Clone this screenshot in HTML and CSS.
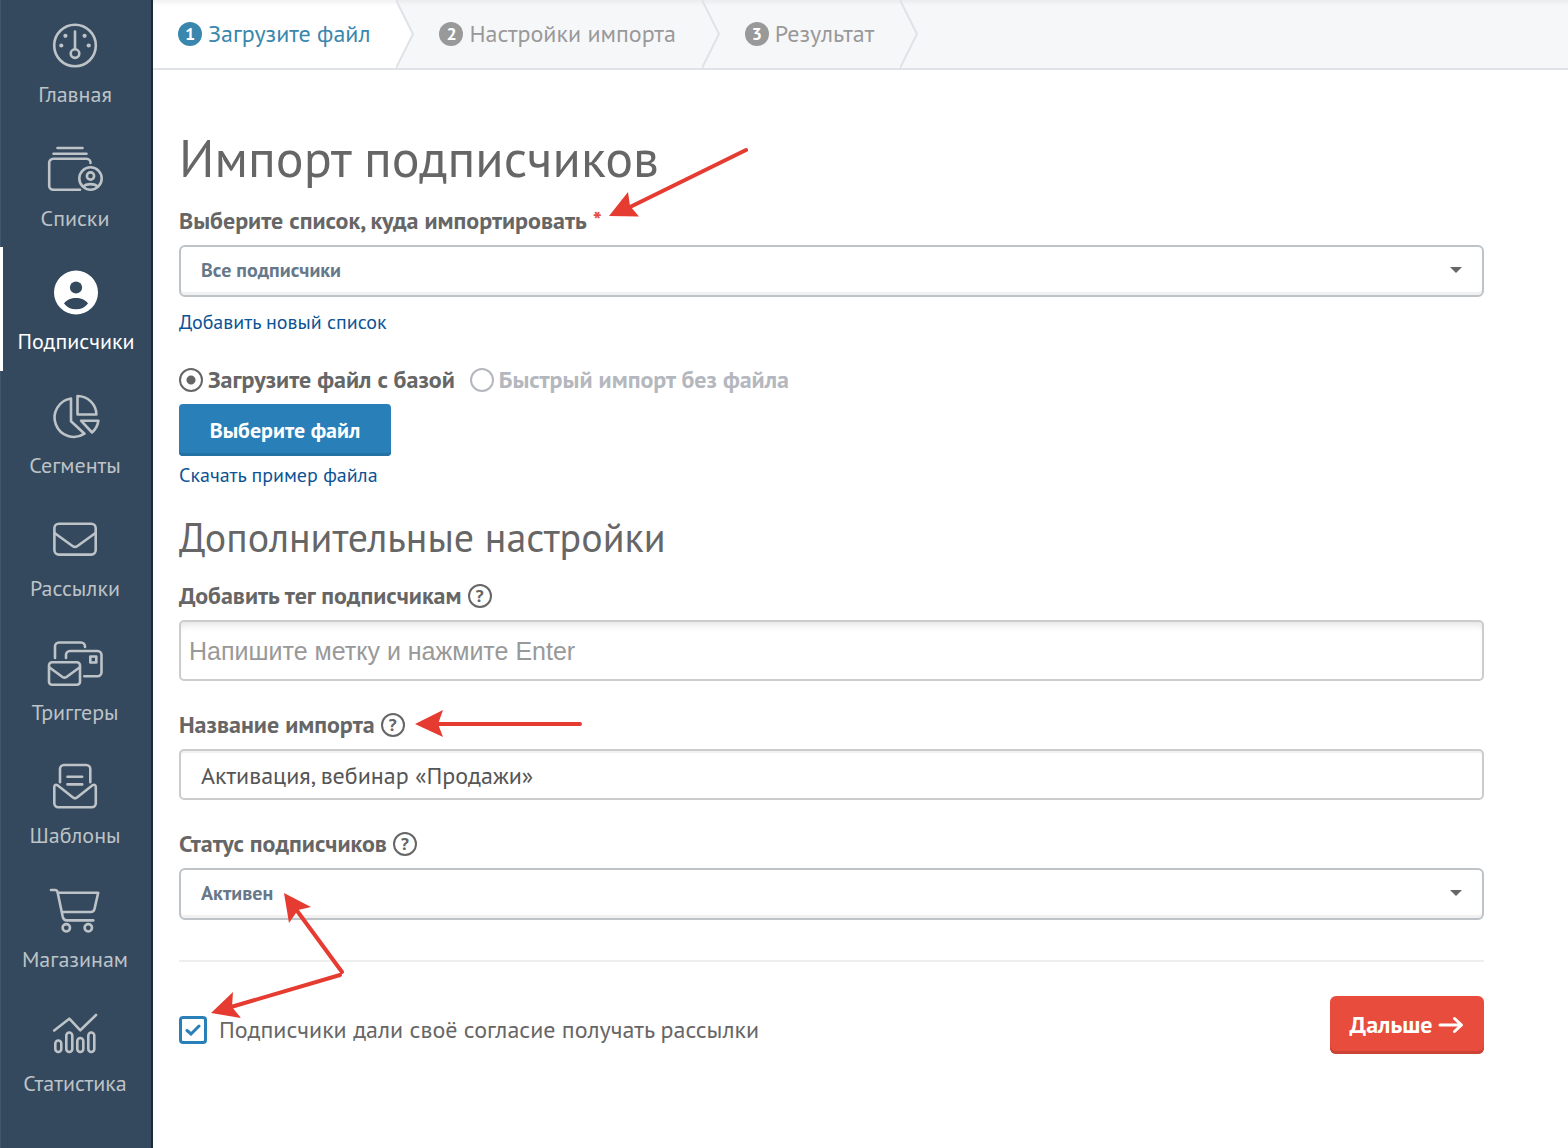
FILE: index.html
```html
<!DOCTYPE html>
<html lang="ru">
<head>
<meta charset="utf-8">
<meta name="viewport" content="width=device-width, initial-scale=1">
<title>Импорт подписчиков</title>
<link rel="stylesheet" href="styles.css">
</head>
<body>
<div class="app">
  <nav class="sidebar" aria-label="Разделы">
    <a class="nav-item" href="#">
      <svg class="nav-icon" viewBox="0 0 56 48" aria-hidden="true"><circle cx="28" cy="23.5" r="20.8"/><path d="M28 9.5V27"/><circle cx="28" cy="31.6" r="4.3"/><g class="solid"><circle cx="18.4" cy="13.8" r="2.1"/><circle cx="37.6" cy="13.8" r="2.1"/><circle cx="14.3" cy="23.5" r="2.1"/><circle cx="41.7" cy="23.5" r="2.1"/></g></svg>
      <span>Главная</span>
    </a>
    <a class="nav-item" href="#">
      <svg class="nav-icon" viewBox="0 0 56 48" aria-hidden="true"><path d="M10.500 2H35.500M6.500 7.700H39.500M43.500 17v-.2a4 4 0 0 0-4-4H6.200a4 4 0 0 0-4 4V39.700a4 4 0 0 0 4 4H33"/><circle cx="43.500" cy="32.500" r="11.200"/><circle cx="43.500" cy="30" r="3.600"/><path d="M36.800 40.500c2-3.200 11.400-3.200 13.400 0"/></svg>
      <span>Списки</span>
    </a>
    <a class="nav-item nav-item--active" href="#" aria-current="page">
      <svg class="nav-icon nav-icon--filled" viewBox="0 0 56 48" aria-hidden="true"><circle cx="28" cy="23.500" r="22"/><g class="cutout"><circle cx="28" cy="18.500" r="6.100"/><path d="M16 34.500C19 30.500 23 29 28 29s9 1.500 12 5.500C37 38.500 33 40.300 28 40.300s-9-1.800-12-5.800z"/></g></svg>
      <span>Подписчики</span>
    </a>
    <a class="nav-item" href="#">
      <svg class="nav-icon" viewBox="0 0 56 48" aria-hidden="true"><path d="M24 5.500A19.300 19.300 0 1 0 37.500 40.700L24 28.200zM30.500 3V21.500H49.400A19 19 0 0 0 30.500 3zM34 27.700H51.400A20 20 0 0 1 45 39.500z"/></svg>
      <span>Сегменты</span>
    </a>
    <a class="nav-item" href="#">
      <svg class="nav-icon" viewBox="0 0 56 48" aria-hidden="true"><rect x="7.400" y="7.700" width="41.300" height="30.900" rx="4.500"/><path d="M7.500 17 25.500 30q2.500 1.800 5 0L48.500 17"/></svg>
      <span>Рассылки</span>
    </a>
    <a class="nav-item" href="#">
      <svg class="nav-icon" viewBox="0 0 56 48" aria-hidden="true"><path d="M8 18V6.500a4 4 0 0 1 4-4H34a4 4 0 0 1 4 4V7M19 18V15a4 4 0 0 1 4-4H50.500a4 4 0 0 1 4 4V32.200a4 4 0 0 1-4 4H37.300"/><rect x="43.300" y="16.500" width="6" height="6"/><rect x="2" y="22.200" width="31" height="22.500" rx="3"/><path d="M2.500 27.500 15.500 37q2 1.300 4 0L32.500 27.500"/></svg>
      <span>Триггеры</span>
    </a>
    <a class="nav-item" href="#">
      <svg class="nav-icon" viewBox="0 0 56 48" aria-hidden="true"><path d="M13 19.300V6a4 4 0 0 1 4-4H39.300a4 4 0 0 1 4 4V19.300M20.500 13.700H35.200M20.500 21.400H35.200"/><path d="M10.500 22.200 26 34.500q2 1.600 4 0L45.500 22.200q3.300-1.400 3.300 2V40.300a4 4 0 0 1-4 4H11.300a4 4 0 0 1-4-4V24.200q0-3.400 3.200-2z"/></svg>
      <span>Шаблоны</span>
    </a>
    <a class="nav-item" href="#">
      <svg class="nav-icon" viewBox="0 0 56 48" aria-hidden="true"><path d="M4 3H8q2 0 2.600 2.200L15.800 30q.8 3.400 4 3.400H46.300M11 5.800H51.200L47.500 22q-.7 3-3.700 3H15"/><circle cx="19.300" cy="40.800" r="3.700"/><circle cx="41.300" cy="40.800" r="3.700"/></svg>
      <span>Магазинам</span>
    </a>
    <a class="nav-item" href="#">
      <svg class="nav-icon" viewBox="0 0 56 48" aria-hidden="true"><path d="M7.200 19.500 22.300 7.700 33.300 19.300 49 4"/><rect x="8.300" y="29.500" width="6" height="11.500" rx="3"/><rect x="19.300" y="21.500" width="6" height="19.500" rx="3"/><rect x="30.300" y="27" width="6" height="14" rx="3"/><rect x="41.300" y="21.500" width="6" height="19.500" rx="3"/></svg>
      <span>Статистика</span>
    </a>
  </nav>

  <div class="page">
    <ol class="steps">
      <li class="step step--current"><span class="step-number">1</span>Загрузите файл</li>
      <li class="step-divider step-divider--current" aria-hidden="true"><svg viewBox="0 0 18 70"><path class="wedge" d="M0 0 17 34 0 68z"/><path class="edge" d="M0 0 17 34 0 68"/></svg></li>
      <li class="step"><span class="step-number">2</span>Настройки импорта</li>
      <li class="step-divider" aria-hidden="true"><svg viewBox="0 0 18 70"><path class="edge" d="M0 0 17 34 0 68"/></svg></li>
      <li class="step"><span class="step-number">3</span>Результат</li>
      <li class="step-divider" aria-hidden="true"><svg viewBox="0 0 18 70"><path class="edge" d="M0 0 17 34 0 68"/></svg></li>
    </ol>

    <main class="content">
      <h1>Импорт подписчиков</h1>
      <form class="form">
        <div class="label-row">
          <label for="list">Выберите список, куда импортировать</label><span class="required">*</span>
        </div>
        <div class="select">
          <select id="list"><option>Все подписчики</option></select>
        </div>
        <a class="link link--list" href="#">Добавить новый список</a>

        <div class="radios">
          <label class="radio"><input type="radio" name="source" checked><span>Загрузите файл с базой</span></label>
          <label class="radio"><input type="radio" name="source"><span>Быстрый импорт без файла</span></label>
        </div>
        <button class="button button--file" type="button">Выберите файл</button>
        <a class="link" href="#">Скачать пример файла</a>

        <h2>Дополнительные настройки</h2>
        <div class="label-row">
          <label for="tag">Добавить тег подписчикам</label><button class="help" type="button">?</button>
        </div>
        <input class="input input--tag" id="tag" type="text" placeholder="Напишите метку и нажмите Enter">

        <div class="label-row label-row--next">
          <label for="name">Название импорта</label><button class="help" type="button">?</button>
        </div>
        <input class="input" id="name" type="text" value="Активация, вебинар «Продажи»">

        <div class="label-row label-row--next">
          <label for="status">Статус подписчиков</label><button class="help" type="button">?</button>
        </div>
        <div class="select">
          <select id="status"><option>Активен</option></select>
        </div>

        <div class="footer">
          <label class="consent"><input type="checkbox" checked><span>Подписчики дали своё согласие получать рассылки</span></label>
          <button class="button button--next" type="submit">Дальше
            <svg viewBox="0 0 26 18" aria-hidden="true"><path d="M2 9H23M16.500 2.500 23.500 9 16.500 15.500"/></svg>
          </button>
        </div>
      </form>

      <svg class="arrows" viewBox="0 0 600 900" aria-hidden="true">
        <path class="shaft" d="M593 80 475 138M427 654H284M189 902 142 838M187 905 78 937"/>
        <path class="head" d="M456 146 475 122 477 136 486 146.500zM262 654 290 640 285 654 290 667zM131 823 158 837 145 840 136 853zM58 943 80 922 79 937 88 948z"/>
      </svg>
    </main>
  </div>
</div>
</body>
</html>
```
FILE: styles.css
```css
* { box-sizing: border-box; }

body {
  margin: 0;
  background: #fff;
  color: #666;
  font-family: "PT Sans", Lato, "Noto Sans", sans-serif;
  font-size: 24px;
  line-height: 32px;
}

button, input, select { font: inherit; color: inherit; }

.app { display: flex; min-height: 100vh; }

/* Sidebar */
.sidebar {
  display: flex;
  flex-direction: column;
  flex: none;
  width: 153px;
  padding-bottom: 36px;
  background: #34495e;
  border-left: 1px solid #40566c;
  border-right: 2px solid #1b2b3a;
}

.nav-item {
  display: flex;
  flex: 1;
  flex-direction: column;
  align-items: center;
  gap: 10px;
  min-height: 108px;
  padding: 22px 2px 0 0;
  color: #bdc3c7;
  font-size: 22px;
  line-height: 28px;
  text-decoration: none;
}

.nav-item--active { color: #fff; margin-left: -1px; border-left: 3px solid #fff; }

.nav-icon {
  width: 56px;
  height: 48px;
  overflow: visible;
  fill: none;
  stroke: currentColor;
  stroke-width: 2.6;
  stroke-linecap: round;
  stroke-linejoin: round;
}
.nav-icon .solid, .nav-icon--filled { fill: currentColor; stroke: none; }
.nav-icon .cutout { fill: #34495e; }

/* Steps */
.page { flex: 1; min-width: 0; }

.steps {
  display: flex;
  height: 70px;
  margin: 0;
  padding: 0;
  list-style: none;
  background: linear-gradient(#ebecee, #f6f7f9 6px);
  border-bottom: 2px solid #dfe2e7;
  color: #999;
}

.step { display: flex; align-items: center; gap: 6px; padding: 0 26px 1px 25px; }
.step--current { background: linear-gradient(#f1f1f1, #fff 6px); color: #3a87ad; }

.step-number {
  width: 24px;
  height: 24px;
  border-radius: 50%;
  background: #999;
  color: #fff;
  font-size: 18px;
  font-weight: 700;
  line-height: 24px;
  text-align: center;
}
.step--current .step-number { background: #3a87ad; }

.step-divider { width: 18px; }
.step-divider svg { display: block; width: 18px; height: 70px; }
.step-divider .wedge { fill: #fff; }
.step-divider .edge { fill: none; stroke: #dfe2e7; stroke-width: 2; }

/* Content */
.content { position: relative; padding: 56px 84px 72px 26px; }

h1, h2 { margin: 0; font-weight: 400; }
h1 { font-size: 52px; line-height: 64px; }
h2 { margin-top: 20px; font-size: 40px; line-height: 56px; }

.form { display: flex; flex-direction: column; align-items: stretch; }

.label-row { display: flex; align-items: center; gap: 6px; height: 32px; margin: 15px 0 8px; font-weight: 700; }
.label-row--next { margin-top: 28px; }
.required { color: #e74c3c; }

.help {
  width: 24px;
  height: 24px;
  padding: 0;
  border: 2px solid #666;
  border-radius: 50%;
  background: none;
  font-size: 18px;
  font-weight: 700;
  line-height: 20px;
}

.select { position: relative; }
.select::after {
  position: absolute;
  top: 22px;
  right: 22px;
  border: 6px solid transparent;
  border-top-color: #666;
  border-bottom: 0;
  content: "";
  pointer-events: none;
}
.select select {
  display: block;
  width: 100%;
  height: 52px;
  padding: 0 20px 2px;
  appearance: none;
  border: 2px solid #bdc3c7;
  border-radius: 6px;
  background: #fff;
  box-shadow: inset 0 -3px 0 #f1f1f1;
  color: #667889;
  font-size: 20px;
  font-weight: 700;
}

.link { align-self: flex-start; color: #0b5394; font-size: 20px; line-height: 28px; text-decoration: none; }
.link--list { margin-top: 11px; }
.button--file + .link { margin-top: 5px; }

.radios { display: flex; gap: 15px; height: 32px; margin: 28px 0 8px; }
.radio { display: flex; align-items: center; gap: 5px; font-weight: 700; }
.radio input {
  width: 24px;
  height: 24px;
  margin: 0;
  appearance: none;
  border: 2px solid #b4b8be;
  border-radius: 50%;
}
.radio input:checked { border-color: #666; background: radial-gradient(circle, #666 4px, transparent 5px); }
.radio input:not(:checked) + span { color: #b4b8be; }

.button { border: 0; color: #fff; font-weight: 700; }
.button--file {
  align-self: flex-start;
  width: 212px;
  height: 52px;
  border-radius: 4px;
  background: #2980b9;
  box-shadow: inset 0 -3px 0 #2471a3;
  font-size: 22px;
}

.input {
  width: 100%;
  height: 51px;
  padding: 2px 20px 0;
  border: 2px solid #ccc;
  border-radius: 5px;
  background: #fff;
  box-shadow: inset 0 2px 1px #f1f1f1;
  color: #555;
}
.input--tag {
  height: 61px;
  padding: 2px 8px 0;
  box-shadow: inset 0 8px 8px -6px #ddd;
  font-family: "Liberation Sans", Arial, sans-serif;
  font-size: 25px;
}
.input--tag::placeholder { color: #999; }

.footer {
  display: flex;
  align-items: center;
  justify-content: space-between;
  margin-top: 40px;
  padding-top: 34px;
  border-top: 2px solid #eee;
}
.consent { display: flex; align-items: center; gap: 12px; padding-top: 9px; }
.consent input {
  width: 28px;
  height: 28px;
  margin: 0;
  appearance: none;
  border: 3px solid #2980b9;
  border-radius: 4px;
  background: no-repeat center / 16px 12px url("data:image/svg+xml,%3Csvg xmlns='http://www.w3.org/2000/svg' viewBox='0 0 16 12'%3E%3Cpath d='M2 6.500 6 10 14 2' fill='none' stroke='%232980b9' stroke-width='3' stroke-linecap='round'/%3E%3C/svg%3E");
}

.button--next {
  display: flex;
  align-items: center;
  justify-content: center;
  gap: 6px;
  width: 154px;
  height: 58px;
  border-radius: 6px;
  background: #e74c3c;
  box-shadow: inset 0 -3px 0 #cb4335;
}
.button--next svg { width: 26px; height: 18px; fill: none; stroke: #fff; stroke-width: 3; stroke-linecap: round; stroke-linejoin: round; }

/* Annotation arrows lying over the form */
.arrows { position: absolute; top: 0; left: 0; width: 600px; height: 900px; overflow: visible; pointer-events: none; }
.arrows .shaft { fill: none; stroke: #e63b30; stroke-width: 4; stroke-linecap: round; }
.arrows .head { fill: #e63b30; }
```
